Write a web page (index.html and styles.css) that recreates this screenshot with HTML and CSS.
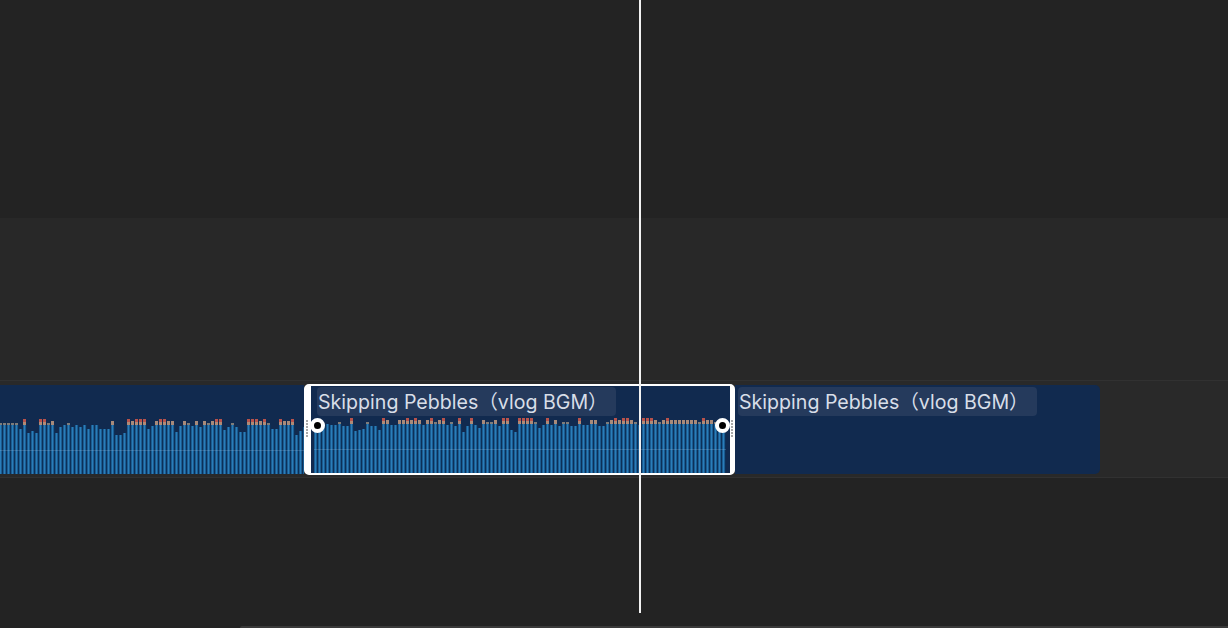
FILE: index.html
```html
<!DOCTYPE html>
<html lang="en">
<head>
<meta charset="utf-8">
<title>Timeline</title>
<link rel="stylesheet" href="styles.css">
</head>
<body>
<main class="timeline">
  <div class="band band-top"></div>
  <div class="band band-mid"></div>
  <section class="track">
    <div class="clip clip-left">
      <div class="wave wave-left" data-bars="aaaaa4c868ccab820a2020400444bxx8cbccc41bccbb71ba1b2babcc52a277cccbca44cbbcx62"></div>
    </div>
    <div class="clip clip-selected">
      <div class="label">Skipping Pebbles（vlog BGM）</div>
      <div class="wave wave-right" data-bars="000011a22c765a226cb11bbcbcb1bcabc1a2c82c14baab2cc68cccca41c1b2aa22c11bb22abcbccba1cccbabcbbbbbbbacbba11"></div>
      <span class="grip grip-start"></span>
      <span class="grip grip-end"></span>
      <span class="knob knob-start"></span>
      <span class="knob knob-end"></span>
    </div>
    <div class="clip clip-right">
      <div class="label">Skipping Pebbles（vlog BGM）</div>
    </div>
  </section>
  <div class="band band-bottom"><div class="scroll-edge"></div></div>
  <div class="playhead"></div>
</main>
<script src="waveform.js"></script>
</body>
</html>
```

FILE: styles.css
```css
* { box-sizing: border-box; }
html, body { margin: 0; height: 100%; background: #232323; overflow: hidden; }
.timeline {
  position: relative;
  width: 1228px;
  height: 628px;
  display: flex;
  flex-direction: column;
  overflow: hidden;
}
.band { flex: none; }
.band-top { height: 218px; background: #232323; }
.band-mid { height: 162px; background: #282828; }
.band-bottom {
  flex: 1;
  background: #232323;
  display: flex;
  flex-direction: column;
  justify-content: flex-end;
  align-items: flex-end;
}
.scroll-edge {
  width: 988px;
  height: 2px;
  background: #3a3a3a;
  border-top-left-radius: 2px;
}
.track {
  flex: none;
  height: 98px;
  display: flex;
  align-items: flex-start;
  padding-top: 4px;
  background: #292929;
  border-top: 1px solid #313131;
  border-bottom: 1px solid #313131;
}
.clip { position: relative; flex: none; background: #112a4f; height: 89px; }
.clip-left {
  width: 304px;
  display: flex;
  flex-direction: column;
  justify-content: flex-end;
  overflow: hidden;
}
.clip-selected {
  width: 431px;
  height: 91px;
  margin-top: -1px;
  background: #112a4f;
  border: solid #fff;
  border-width: 2px 5px 2px 7px;
  border-radius: 5px;
  display: flex;
  flex-direction: column;
}
.clip-right {
  width: 365px;
  border-radius: 0 5px 5px 0;
  padding: 2px 0 0 3px;
}
.label {
  flex: none;
  height: 29px;
  width: 299px;
  padding: 1px 0 0 1px;
  background: #253a5c;
  border-radius: 4px;
  color: #d8dee8;
  font: 19.6px/29px Inter, "Noto Sans CJK SC", sans-serif;
  white-space: nowrap;
}
.clip-selected .label { margin: 1px 0 0 6px; }
.wave {
  position: relative;
  display: flex;
  gap: 1px;
  align-items: flex-end;
  height: 55px;
  flex: none;
}
.wave::after {
  content: "";
  position: absolute;
  left: 0;
  right: 0;
  bottom: 23px;
  height: 1px;
  background: rgba(170, 205, 235, .22);
}
.wave-left { margin-left: -1px; }
.wave-right { margin: 2px 0 0 3px; width: 412px; }
.bar { flex: none; width: 3px; display: flex; flex-direction: column; }
.bar-body {
  background: linear-gradient(90deg, #1b5c90 0 1px, #2a7dba 1px 2px, #1b5c90 2px);
  box-shadow: 1px 0 0 #0c2f58;
}
.bar-peak { height: 2px; background: #7f7c7a; }
.bar-peak.med { height: 4px; background: #a88a7a; }
.bar-peak.tall { height: 6px; background: linear-gradient(#b8534c 0 50%, #b08a76 50%); }
.grip {
  position: absolute;
  top: 34px;
  width: 2px;
  height: 18px;
  background: repeating-linear-gradient(#a8a8a8 0 2px, transparent 2px 3px);
}
.grip-start { left: -5px; }
.grip-end { right: -3px; }
.knob {
  position: absolute;
  top: 32px;
  width: 15px;
  height: 15px;
  border-radius: 50%;
  background: #000;
  border: 4px solid #fff;
}
.knob-start { left: -1px; }
.knob-end { right: 0; }
.playhead {
  position: absolute;
  left: 639px;
  top: 0;
  width: 2px;
  height: 613px;
  background: #f2f2f2;
}
```

FILE: waveform.js
```js
document.querySelectorAll('.wave').forEach(function (wave) {
  var data = wave.dataset.bars;
  var peaks = { a: '', b: 'med', c: 'tall' };
  data.split('').forEach(function (ch) {
    var bar = document.createElement('div');
    bar.className = 'bar';
    var drop = 0;
    if (ch in peaks) {
      var peak = document.createElement('div');
      peak.className = 'bar-peak ' + peaks[ch];
      bar.appendChild(peak);
    } else {
      drop = ch === 'x' ? 10 : parseInt(ch, 10);
    }
    var body = document.createElement('div');
    body.className = 'bar-body';
    body.style.height = (49 - drop) + 'px';
    bar.appendChild(body);
    wave.appendChild(bar);
  });
});
```
